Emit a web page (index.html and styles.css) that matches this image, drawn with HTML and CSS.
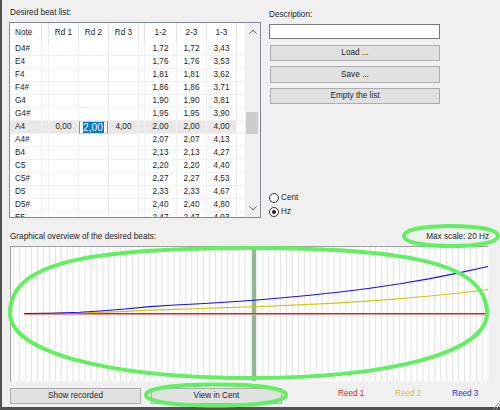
FILE: index.html
```html
<!DOCTYPE html>
<html>
<head>
<meta charset="utf-8">
<link rel="stylesheet" href="styles.css">
</head>
<body>
<div class="window">
  <div class="top">
    <div class="left">
      <div class="caption">Desired beat list:</div>
      <div class="list">
        <div class="grid">
          <div class="row head"><div>Note</div><div></div><div>Rd 1</div><div>Rd 2</div><div>Rd 3</div><div></div><div>1-2</div><div>2-3</div><div>1-3</div><div></div></div>
          <div class="row"><div>D4#</div><div></div><div></div><div></div><div></div><div></div><div>1,72</div><div>1,72</div><div>3,43</div><div></div></div>
          <div class="row"><div>E4</div><div></div><div></div><div></div><div></div><div></div><div>1,76</div><div>1,76</div><div>3,53</div><div></div></div>
          <div class="row"><div>F4</div><div></div><div></div><div></div><div></div><div></div><div>1,81</div><div>1,81</div><div>3,62</div><div></div></div>
          <div class="row"><div>F4#</div><div></div><div></div><div></div><div></div><div></div><div>1,86</div><div>1,86</div><div>3,71</div><div></div></div>
          <div class="row"><div>G4</div><div></div><div></div><div></div><div></div><div></div><div>1,90</div><div>1,90</div><div>3,81</div><div></div></div>
          <div class="row"><div>G4#</div><div></div><div></div><div></div><div></div><div></div><div>1,95</div><div>1,95</div><div>3,90</div><div></div></div>
          <div class="row sel"><div>A4</div><div></div><div>0,00</div><div class="editcell"><span class="edit"><span class="hl">2,00</span></span></div><div>4,00</div><div></div><div>2,00</div><div>2,00</div><div>4,00</div><div></div></div>
          <div class="row"><div>A4#</div><div></div><div></div><div></div><div></div><div></div><div>2,07</div><div>2,07</div><div>4,13</div><div></div></div>
          <div class="row"><div>B4</div><div></div><div></div><div></div><div></div><div></div><div>2,13</div><div>2,13</div><div>4,27</div><div></div></div>
          <div class="row"><div>C5</div><div></div><div></div><div></div><div></div><div></div><div>2,20</div><div>2,20</div><div>4,40</div><div></div></div>
          <div class="row"><div>C5#</div><div></div><div></div><div></div><div></div><div></div><div>2,27</div><div>2,27</div><div>4,53</div><div></div></div>
          <div class="row"><div>D5</div><div></div><div></div><div></div><div></div><div></div><div>2,33</div><div>2,33</div><div>4,67</div><div></div></div>
          <div class="row"><div>D5#</div><div></div><div></div><div></div><div></div><div></div><div>2,40</div><div>2,40</div><div>4,80</div><div></div></div>
          <div class="row"><div>E5</div><div></div><div></div><div></div><div></div><div></div><div>2,47</div><div>2,47</div><div>4,93</div><div></div></div>
        </div>
        <div class="sb">
          <div class="arrow"><svg width="8" height="5" viewBox="0 0 8 5"><polyline points="0.5,4.5 4,1 7.5,4.5" fill="none" stroke="#606060" stroke-width="1"/></svg></div>
          <div class="track"><div class="thumb"></div></div>
          <div class="arrow"><svg width="8" height="5" viewBox="0 0 8 5"><polyline points="0.5,0.5 4,4 7.5,0.5" fill="none" stroke="#606060" stroke-width="1"/></svg></div>
        </div>
      </div>
    </div>
    <div class="right">
      <div class="desc-label">Description:</div>
      <div class="textbox"></div>
      <div class="btn load">Load ...</div>
      <div class="btn save">Save ...</div>
      <div class="btn empty">Empty the list</div>
      <div class="radios">
        <div class="radio"><span class="dot"></span><span>Cent</span></div>
        <div class="radio"><span class="dot checked"><span class="inner"></span></span><span>Hz</span></div>
      </div>
    </div>
  </div>
  <div class="chart-head"><span>Graphical overview of the desired beats:</span><span>Max scale: 20 Hz</span></div>
  <div class="chart">
    <svg class="plot" width="477" height="134" viewBox="11 247 477 134">
      <defs>
        <pattern id="g" patternUnits="userSpaceOnUse" x="13.3" y="0" width="5.93" height="134">
          <rect x="0" y="0" width="1" height="400" fill="#e3e3e3"/>
        </pattern>
      </defs>
      <rect x="11" y="247" width="477" height="134" fill="url(#g)"/>
      <rect x="252" y="247" width="4" height="134" fill="#93b793"/>
      <rect x="24" y="313" width="464" height="1" fill="#ff1010"/>
      <rect x="24" y="314" width="464" height="1" fill="#ff8a8a"/>
      <polyline fill="none" stroke="#d0c810" stroke-width="1.2" points="25,313.5 50,313.4 80,313 100,312.3 125,311.3 150,310.1 175,309.3 200,308.5 225,307.7 254,306.75 280,305.7 310,304.4 340,302.8 370,300.9 400,298.65 430,296 460,293 488,289.6"/>
      <polyline fill="none" stroke="#1010ff" stroke-width="1.1" points="25,313.5 50,313.2 80,312.3 100,311 125,309 150,306.6 175,305 200,303.8 225,302.2 254,300.2 280,298 310,295.2 340,292 370,288.2 400,283.8 430,278.6 460,272.6 488,266.5"/>
    </svg>
  </div>
  <div class="bottom">
    <div class="bbtn">Show recorded</div>
    <div class="bbtn view">View in Cent</div>
    <div class="legends">
      <span class="legend r1">Reed 1</span>
      <span class="legend r2">Reed 2</span>
      <span class="legend r3">Reed 3</span>
    </div>
  </div>
</div>
<svg class="grip" width="8" height="8" viewBox="0 0 8 8">
  <line x1="1" y1="8" x2="8" y2="1" stroke="#a0a0a0" stroke-width="1"/>
  <line x1="4" y1="8" x2="8" y2="4" stroke="#a0a0a0" stroke-width="1"/>
</svg>
<svg class="annot" width="500" height="410" viewBox="0 0 500 410">
  <g fill="none" stroke="#62f062" stroke-width="4">
    <path d="M10,313 C10,264 82,248 250,248 C419,248 487,266 487,313 C487,352 392,378 250,378 C108,378 10,352 10,313 Z"/>
    <path d="M404,236 C404,229.5 425,226 451,226 C477,226 498,229.5 498,236 C498,242.5 477,246 451,246 C425,246 404,242.5 404,236 Z"/>
    <path d="M146,395 C146,388 178,384.5 216,384.5 C254,384.5 286,388 286,395 C286,402 254,405.5 216,405.5 C178,405.5 146,402 146,395 Z"/>
  </g>
</svg>
</body>
</html>
```

FILE: styles.css
```css
* { box-sizing: border-box; }
html, body { margin: 0; padding: 0; }
body {
  position: relative;
  width: 500px;
  height: 410px;
  overflow: hidden;
  background: #f0f0f0;
  font-family: "Liberation Sans", Arial, sans-serif;
  font-size: 8.2px;
  color: #1e1e1e;
}
.window {
  width: 500px;
  height: 410px;
  border-left: 2px solid #505050;
  border-bottom: 3px solid #505050;
  display: flex;
  flex-direction: column;
}
.top { height: 229px; display: flex; flex: none; }
.left { margin-left: 7px; width: 252px; flex: none; }
.caption { height: 22px; padding-top: 8px; padding-left: 1px; line-height: 10px; }
.list {
  height: 196px;
  border: 1px solid #828790;
  background: #fff;
  display: flex;
}
.grid { width: 235px; overflow: hidden; flex: none; }
.row {
  display: grid;
  grid-template-columns: 32px 7px 30px 30px 30px 6px 32px 30px 30px 8px;
  height: 13px;
}
.row > div {
  border-right: 1px solid #f0f0f0;
  border-bottom: 1px solid #f0f0f0;
  text-align: center;
  line-height: 12px;
  white-space: nowrap;
}
.row > div:first-child { text-align: left; padding-left: 5px; }
.row > div:last-child { border-right: 0; }
.head { height: 20px; }
.head > div { line-height: 20px; border-bottom: 0; border-right-color: #e5e5e5; }
.sel > div { background: #e8e8e8; }
.sel > div:last-child { background: #fff; }
.sel > .editcell { border-bottom: 0; background: #fff; }
.edit {
  display: block;
  height: 13px;
  border-left: 1px solid #8a8a8a;
  border-right: 1px solid #8a8a8a;
  border-top: 1px solid #d0d0d0;
  border-bottom: 1px solid #d0d0d0;
  text-align: left;
  padding-left: 3px;
  line-height: 11px;
}
.hl {
  display: inline-block;
  background: #0078d7;
  color: #fff;
  font-size: 10.2px;
  line-height: 11px;
  padding: 0 1px 0 0;
  vertical-align: top;
}
.sb { width: 15px; flex: none; background: #f0f0f0; display: flex; flex-direction: column; }
.arrow { height: 17px; display: flex; align-items: center; justify-content: center; }
.arrow svg { display: block; }
.track { flex: 1; }
.thumb { margin: 72px 2px 0 1px; height: 22px; background: #cdcdcd; }
.right { margin-left: 8px; width: 172px; flex: none; display: flex; flex-direction: column; }
.desc-label { height: 24px; padding-top: 10px; line-height: 10px; }
.textbox { height: 15px; width: 171px; border: 1px solid #7a7a7a; background: #fff; }
.btn {
  margin-left: 1px;
  width: 170px;
  height: 16px;
  border: 1px solid #adadad;
  background: #e1e1e1;
  text-align: center;
  line-height: 14px;
}
.load { margin-top: 6px; }
.save { margin-top: 5px; height: 17px; line-height: 15px; }
.empty { margin-top: 5px; }
.radios { margin-top: 89px; }
.radio { height: 14px; display: flex; align-items: flex-start; line-height: 10px; }
.dot {
  width: 10px;
  height: 10px;
  border: 1px solid #333;
  border-radius: 50%;
  background: #fff;
  margin-right: 2px;
  display: flex;
  align-items: center;
  justify-content: center;
}
.inner { width: 4px; height: 4px; border-radius: 50%; background: #222; }
.chart-head {
  height: 17px;
  margin: 0 11px 0 8px;
  padding-top: 3px;
  line-height: 10px;
  display: flex;
  justify-content: space-between;
  flex: none;
}
.chart {
  margin-left: 8px;
  width: 479px;
  height: 136px;
  flex: none;
  border: 1px solid;
  border-color: #a0a0a0 #f4f4f4 #f4f4f4 #a0a0a0;
  background: #fff;
}
.plot { display: block; }
.bottom { display: flex; margin: 6px 0 0 8px; height: 16px; flex: none; }
.bbtn {
  flex: none;
  width: 131px;
  height: 16px;
  border: 1px solid #adadad;
  background: #e1e1e1;
  text-align: center;
  line-height: 14px;
}
.view { margin-left: 10px; }
.legends { flex: none; margin-left: 56px; margin-top: 1px; display: flex; line-height: 10px; }
.legend { width: 57px; flex: none; }
.legend.r3 { width: auto; }
.r1 { color: #f02020; }
.r2 { color: #cfc53a; }
.r3 { color: #2a2af0; }
.grip { position: absolute; right: 0; bottom: 1px; display: block; }
.annot { position: absolute; left: 0; top: 0; display: block; pointer-events: none; }
```
